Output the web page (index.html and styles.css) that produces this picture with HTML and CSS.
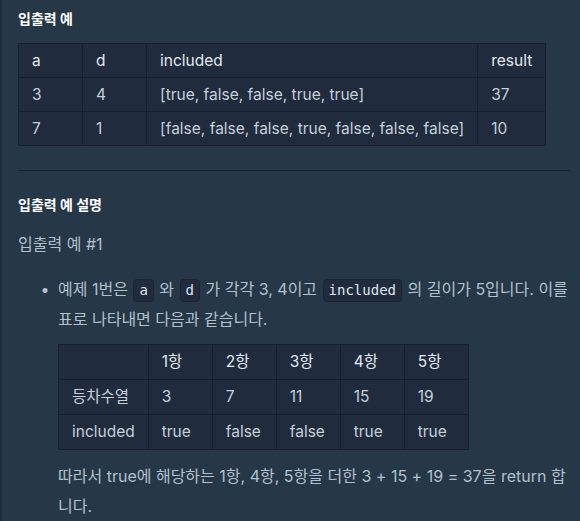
FILE: index.html
```html
<!DOCTYPE html>
<html lang="ko">
<head>
<meta charset="utf-8">
<title>입출력 예</title>
<link rel="stylesheet" href="styles.css">
</head>
<body>
<div class="doc">
  <h5 class="heading">입출력 예</h5>
  <table class="grid">
    <thead>
      <tr><th>a</th><th>d</th><th>included</th><th>result</th></tr>
    </thead>
    <tbody>
      <tr><td>3</td><td>4</td><td>[true, false, false, true, true]</td><td>37</td></tr>
      <tr><td>7</td><td>1</td><td>[false, false, false, true, false, false, false]</td><td>10</td></tr>
    </tbody>
  </table>
  <hr class="rule">
  <h5 class="heading heading-second">입출력 예 설명</h5>
  <p class="text example-title">입출력 예 #1</p>
  <ul class="list">
    <li class="text">
      <p class="line"><span class="phrase">예제 1번은 <code>a</code> 와 <code>d</code> 가 각각 3, 4이고 <code>included</code> 의 길이가 5입니다. 이를</span> <span class="phrase">표로 나타내면 다음과 같습니다.</span></p>
      <table class="grid inner">
        <thead>
          <tr><th class="first"></th><th>1항</th><th>2항</th><th>3항</th><th>4항</th><th>5항</th></tr>
        </thead>
        <tbody>
          <tr><td class="first">등차수열</td><td>3</td><td>7</td><td>11</td><td>15</td><td>19</td></tr>
          <tr><td class="first">included</td><td>true</td><td>false</td><td>false</td><td>true</td><td>true</td></tr>
        </tbody>
      </table>
      <p class="line after">따라서 true에 해당하는 1항, 4항, 5항을 더한 3 + 15 + 19 = 37을 return 합니다.</p>
    </li>
  </ul>
</div>
</body>
</html>
```
FILE: styles.css
```css
html, body {
  margin: 0;
  padding: 0;
  background: #263747;
}
body {
  border-left: 2px solid #1e2c3a;
  min-height: 521px;
  box-sizing: border-box;
  font-family: Inter, "Noto Sans CJK KR", sans-serif;
  color: #b2c0cc;
}
.doc {
  padding: 8px 10px 0 16px;
}
.heading {
  margin: 0;
  font-size: 14px;
  line-height: 22px;
  font-weight: 700;
  color: #ffffff;
}
.heading-second {
  margin-top: 23px;
}
.grid {
  border-collapse: collapse;
  background: #202b3d;
  margin-top: 13px;
  font-size: 15.5px;
}
.grid th,
.grid td {
  border: 1px solid #172030;
  box-sizing: border-box;
  width: 64px;
  padding: 5px 13px;
  line-height: 23px;
  text-align: left;
  white-space: nowrap;
  font-weight: 400;
}
.grid th {
  color: #e4e9ef;
}
.grid td {
  color: #c6cfd9;
}
.rule {
  margin: 24px 0 0;
  border: 0;
  border-top: 1px solid #172030;
  height: 0;
}
.text {
  font-size: 16px;
  line-height: 30px;
}
.example-title {
  margin: 13px 0 0;
}
.list {
  margin: 15px 0 0;
  padding-left: 40px;
}
.list li::marker {
  content: "•  ";
  color: #b2c0cc;
}
.line {
  margin: 0;
}
.phrase {
  white-space: normal;
}
code {
  display: inline-block;
  font-family: "DejaVu Sans Mono", monospace;
  font-size: 14px;
  line-height: 21px;
  background: #202b3d;
  border: 1px solid #1a2433;
  border-radius: 4px;
  padding: 0 5px;
  margin: 0 1px;
  color: #dfe6ee;
}
.inner {
  margin-top: 10px;
}
.inner th,
.inner td {
  line-height: 24px;
}
.inner .first {
  width: 88px;
}
.after {
  margin-top: 11px;
}
```
